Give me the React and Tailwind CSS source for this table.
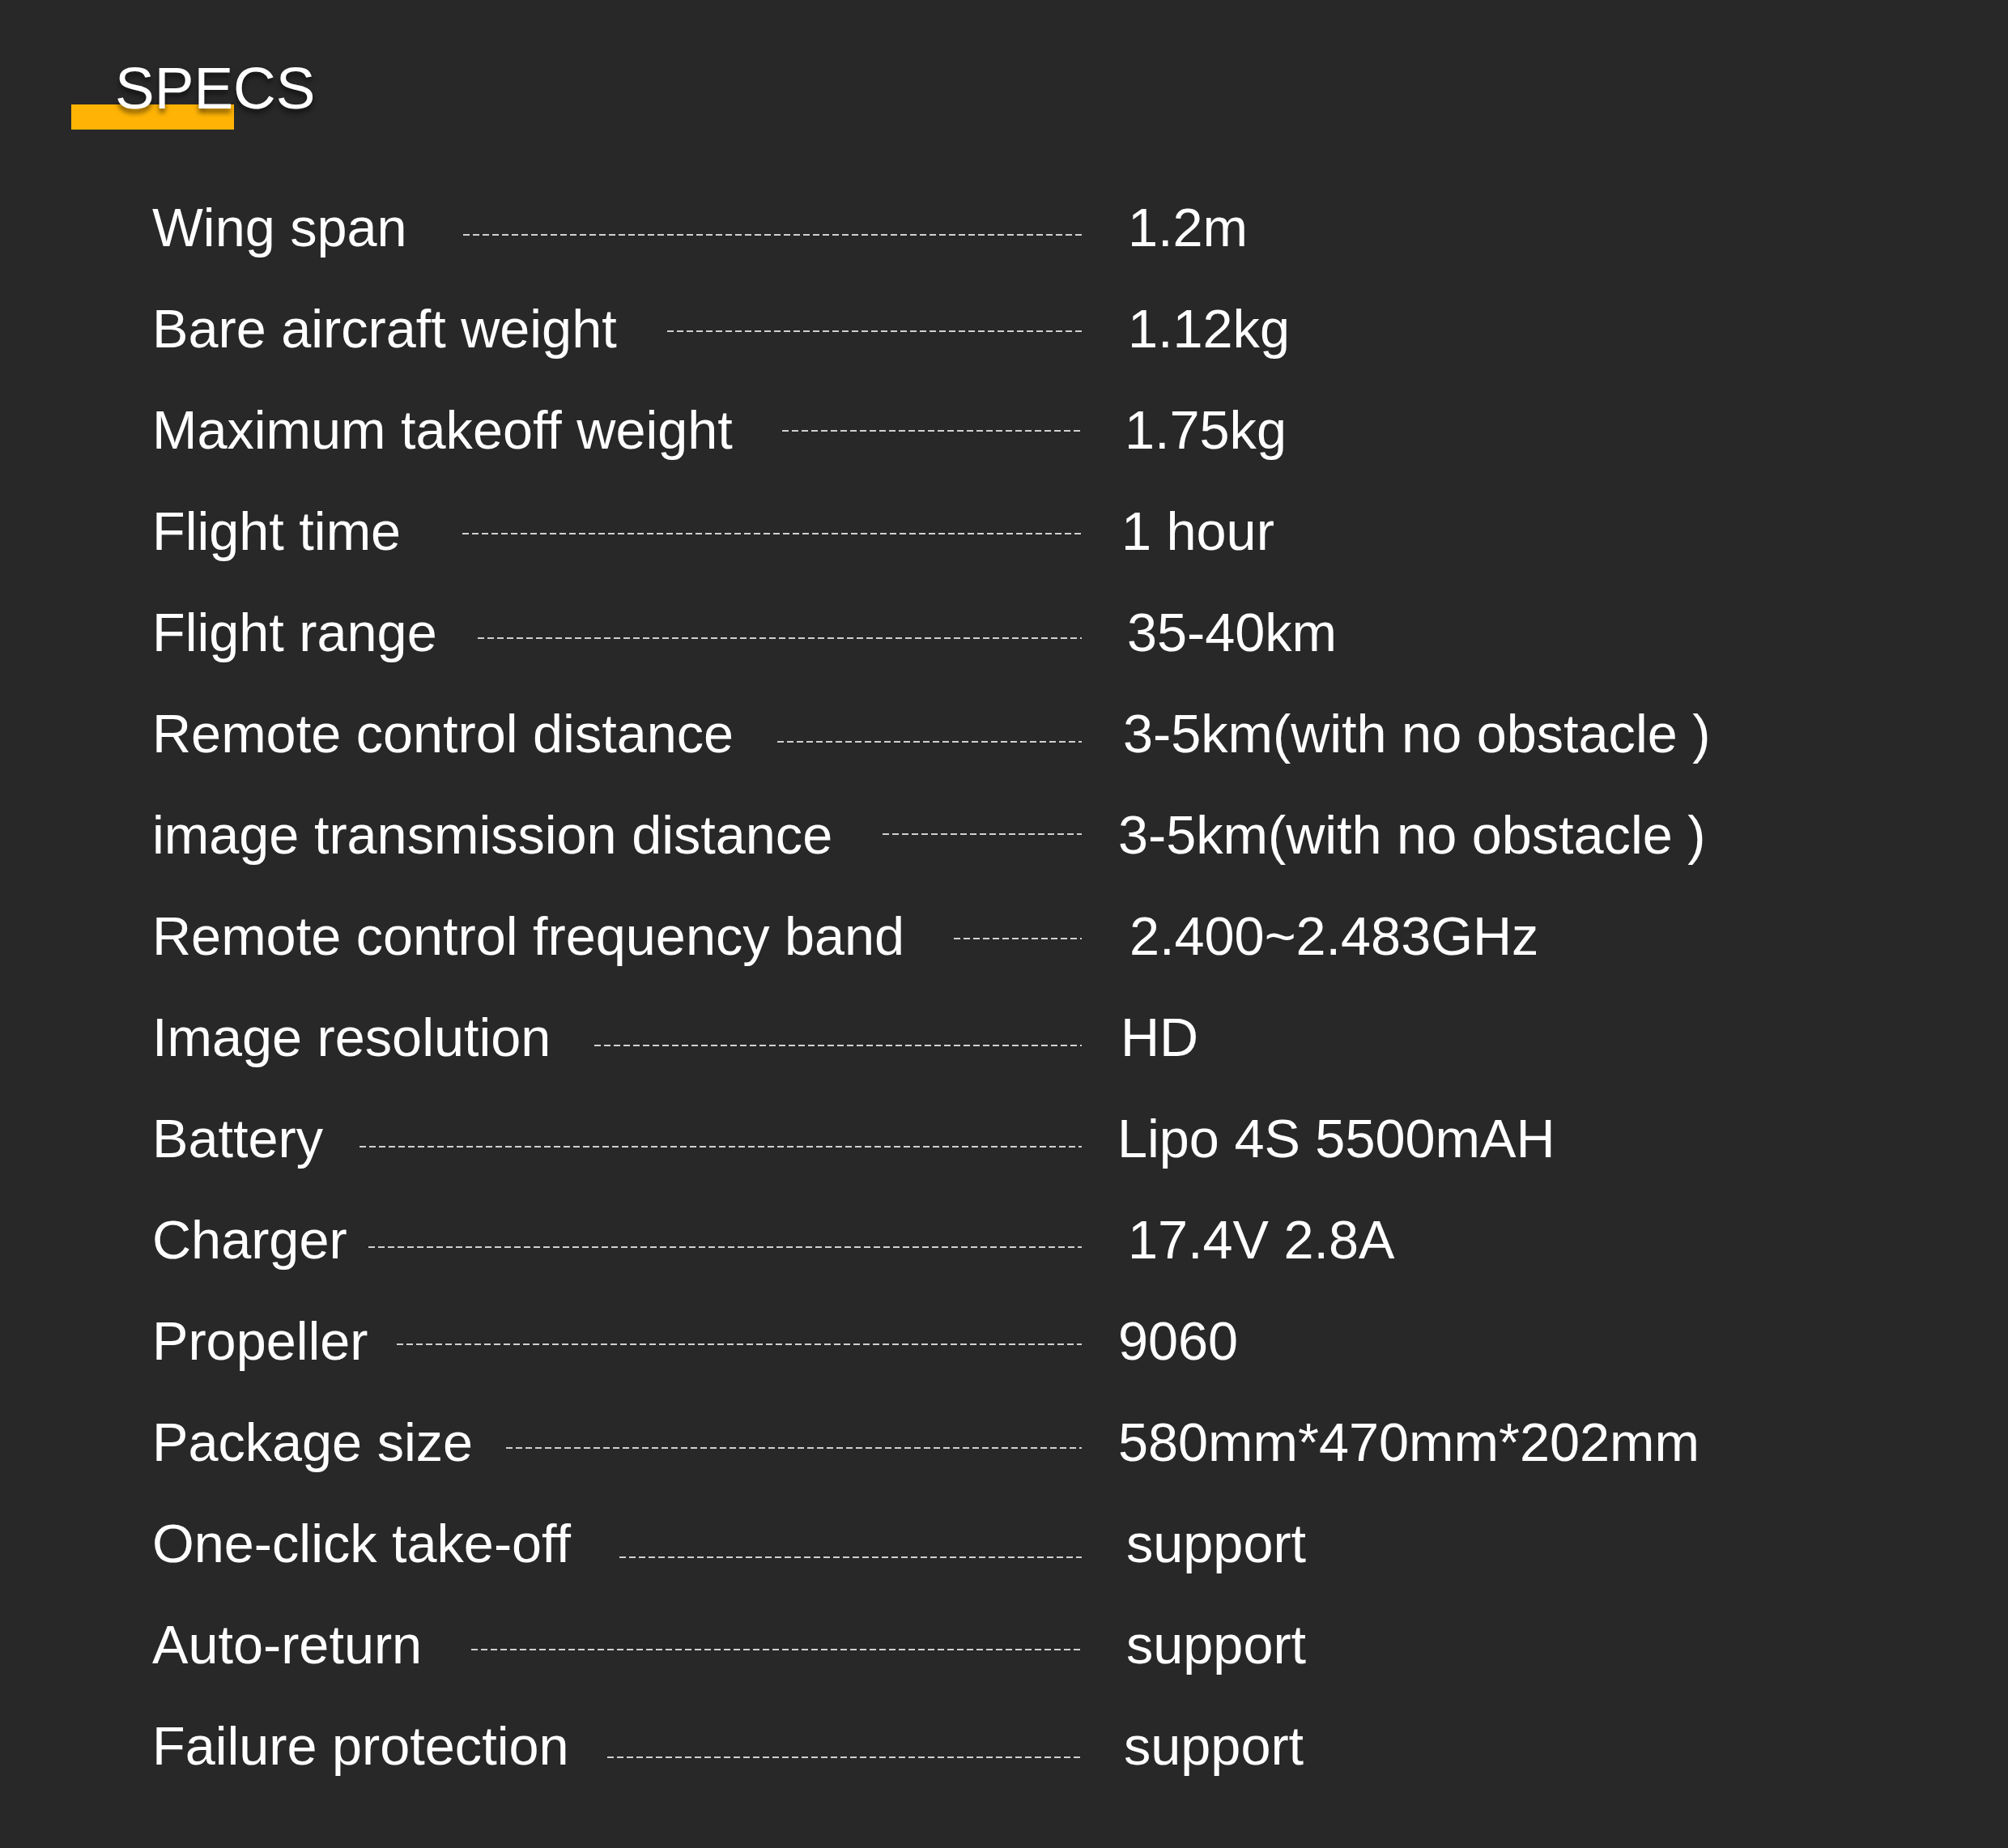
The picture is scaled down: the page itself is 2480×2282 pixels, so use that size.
import React from "react";

const specs = [
    { label: "Wing span", value: "1.2m", dash: "w-[764px] translate-y-[8px]", val: "ml-[57px]" },
    { label: "Bare aircraft weight", value: "1.12kg", dash: "w-[512px] translate-y-[2px]", val: "ml-[57px]" },
    { label: "Maximum takeoff weight", value: "1.75kg", dash: "w-[370px] translate-y-[0px]", val: "ml-[53px]" },
    { label: "Flight time", value: "1 hour", dash: "w-[765px] translate-y-[2px]", val: "ml-[49px]" },
    { label: "Flight range", value: "35-40km", dash: "w-[746px] translate-y-[6px]", val: "ml-[56px]" },
    { label: "Remote control distance", value: "3-5km(with no obstacle )", dash: "w-[376px] translate-y-[9px]", val: "ml-[51px]" },
    { label: "image transmission distance", value: "3-5km(with no obstacle )", dash: "w-[246px] -translate-y-[2px]", val: "ml-[45px]" },
    { label: "Remote control frequency band", value: "2.400~2.483GHz", dash: "w-[158px] translate-y-[2px]", val: "ml-[59px]" },
    { label: "Image resolution", value: "HD", dash: "w-[602px] translate-y-[9px]", val: "ml-[48px]" },
    { label: "Battery", value: "Lipo 4S 5500mAH", dash: "w-[892px] translate-y-[9px]", val: "ml-[44px]" },
    { label: "Charger", value: "17.4V 2.8A", dash: "w-[881px] translate-y-[8px]", val: "ml-[57px]" },
    { label: "Propeller", value: "9060", dash: "w-[846px] translate-y-[3px]", val: "ml-[45px]" },
    { label: "Package size", value: "580mm*470mm*202mm", dash: "w-[711px] translate-y-[6px]", val: "ml-[45px]" },
    { label: "One-click take-off", value: "support", dash: "w-[571px] translate-y-[16px]", val: "ml-[55px]" },
    { label: "Auto-return", value: "support", dash: "w-[754px] translate-y-[5px]", val: "ml-[55px]" },
    { label: "Failure protection", value: "support", dash: "w-[586px] translate-y-[13px]", val: "ml-[52px]" },
];

const SpecRow = ({ spec }) => (
    <div className="flex items-center h-[125px] pl-[188px]">
        <div className="flex items-center w-[1148px] shrink-0">
            <span className="whitespace-nowrap">{spec.label}</span>
            {/* dotted leader */}
            <div className={`ml-auto h-[2px] bg-[repeating-linear-gradient(to_right,#d0d0d0_0_8px,transparent_8px_12px)] ${spec.dash}`} />
        </div>
        <span className={`whitespace-nowrap ${spec.val}`}>{spec.value}</span>
    </div>
);

const App = () => {
    return (
        <div className="w-[2480px] h-[2282px] bg-[#282828] text-white font-['Liberation_Sans',Arial,sans-serif] overflow-hidden">
            <div className="relative pt-[72px] pl-[142px]">
                <div className="absolute left-[88px] top-[129px] w-[201px] h-[31px] bg-[#ffb405]" />
                <h1 className="relative text-[73px] leading-[73px] font-normal [text-shadow:0_5px_6px_rgba(0,0,0,0.55)]">
                    SPECS
                </h1>
            </div>

            <div className="mt-[74px] text-[66.6px] leading-[125px]">
                {specs.map((spec) => (
                    <SpecRow key={spec.label} spec={spec} />
                ))}
            </div>
        </div>
    );
};

export default App;
